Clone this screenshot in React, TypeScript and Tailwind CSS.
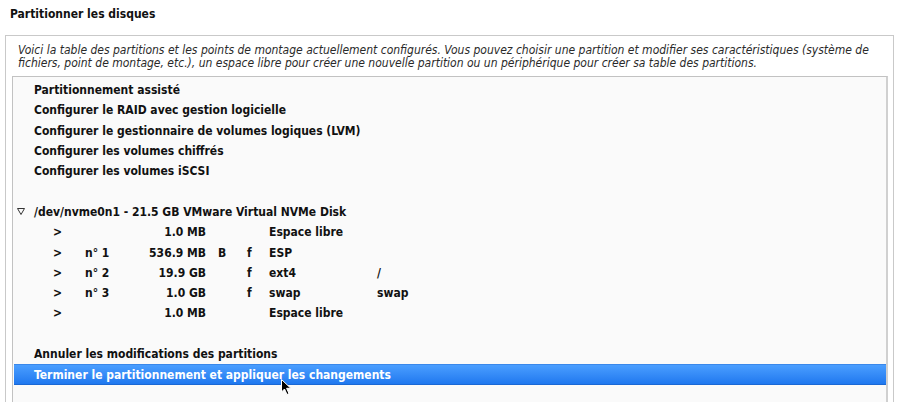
import React from "react";

const menuTop = [
  "Partitionnement assisté",
  "Configurer le RAID avec gestion logicielle",
  "Configurer le gestionnaire de volumes logiques (LVM)",
  "Configurer les volumes chiffrés",
  "Configurer les volumes iSCSI",
];

const parts = [
  { n: "", size: "1.0 MB", b: "", f: "", fs: "Espace libre", mp: "" },
  { n: "n° 1", size: "536.9 MB", b: "B", f: "f", fs: "ESP", mp: "" },
  { n: "n° 2", size: "19.9 GB", b: "", f: "f", fs: "ext4", mp: "/" },
  { n: "n° 3", size: "1.0 GB", b: "", f: "f", fs: "swap", mp: "swap" },
  { n: "", size: "1.0 MB", b: "", f: "", fs: "Espace libre", mp: "" },
];

export default function App() {
  return (
    <div className="relative w-[904px] h-[402px] overflow-hidden bg-white text-[#111] font-['DejaVu_Sans_Condensed','DejaVu_Sans',sans-serif] text-[12px]">
      <div className="h-[35px] pt-[7px] pl-[10px] leading-[14px] font-bold">Partitionner les disques</div>
      <div className="ml-[5px] w-[889px] h-[400px] border border-[#c9c9c9] bg-white">
        <div className="pl-[12px] pt-[8px] pr-[8px] italic text-[#2a2a2a] leading-[13px] text-[12px]">
          Voici la table des partitions et les points de montage actuellement configurés. Vous pouvez choisir une partition et modifier ses caractéristiques (système de fichiers, point de montage, etc.), un espace libre pour créer une nouvelle partition ou un périphérique pour créer sa table des partitions.
        </div>
        <div className="mt-[6px] ml-[6px] mr-[5px] h-[340px] border border-[#c2c2c2] border-r-2 border-r-[#d0d0d0] bg-[#fafafa] pt-[3px] pl-[1px] font-bold">
          {menuTop.map((t) => (
            <div key={t} className="h-[20.3px] flex items-center pl-[20px]">{t}</div>
          ))}
          <div className="h-[20.3px]" />
          <div className="h-[20.3px] flex items-center pl-[3px]">
            <svg width="8" height="7" viewBox="0 0 8 7" className="mr-[9px]">
              <path d="M0.5 0.5 H7.5 L4 6.5 Z" fill="none" stroke="#333" strokeWidth="1" />
            </svg>
            /dev/nvme0n1 - 21.5 GB VMware Virtual NVMe Disk
          </div>
          {parts.map((p, i) => (
            <div key={i} className="h-[20.3px] grid grid-cols-[39px_32px_40px_81px_12px_29px_22px_108px_1fr] items-center">
              <div />
              <div>&gt;</div>
              <div>{p.n}</div>
              <div className="text-right">{p.size}</div>
              <div />
              <div>{p.b}</div>
              <div>{p.f}</div>
              <div>{p.fs}</div>
              <div>{p.mp}</div>
            </div>
          ))}
          <div className="h-[20.3px]" />
          <div className="h-[20.3px] flex items-center pl-[20px]">Annuler les modifications des partitions</div>
          <div className="h-[21px] flex items-center pl-[20px] text-white bg-linear-to-b from-[#4a9eff] to-[#1f78ef] border-y border-t-[#3a88ea] border-b-[#1a68d4]">
            Terminer le partitionnement et appliquer les changements
          </div>
        </div>
      </div>
      <svg className="absolute left-[281px] top-[379px]" width="11" height="17" viewBox="0 0 11 17">
        <path d="M0.5 0.5 L0.5 13 L3.5 10 L6 15.5 L8 14.6 L5.6 9.3 L9.8 9.3 Z" fill="#000" stroke="#fff" strokeWidth="1" />
      </svg>
    </div>
  );
}
